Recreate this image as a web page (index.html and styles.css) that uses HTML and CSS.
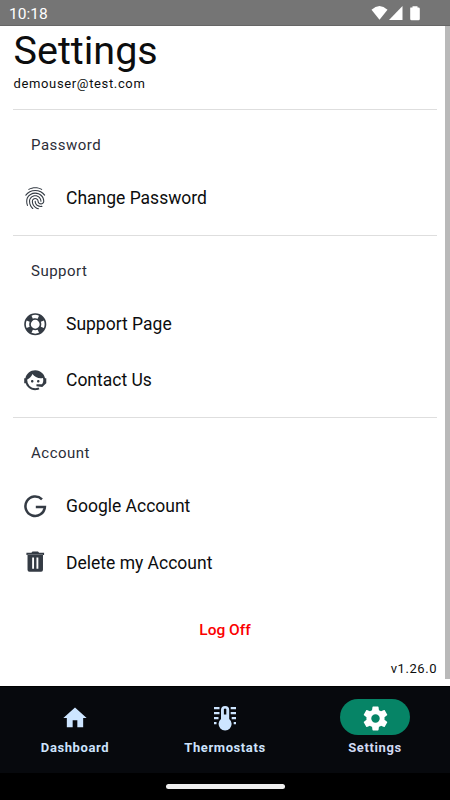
FILE: index.html
```html
<!DOCTYPE html>
<html lang="en">
<head>
<meta charset="utf-8">
<title>Settings</title>
<link rel="stylesheet" href="styles.css">
</head>
<body>
<header class="status">
  <span class="clock">10:18</span>
  <svg class="status-icons" viewBox="0 0 54 20" width="54" height="20">
    <path d="M1.5 6.8Q9.5-.6 17.5 6.800L9.500 16.700Z"/>
    <path d="M19 17L32.500 3V17Z"/>
    <path d="M40.500 4.500h2V3.200h5v1.300h1q1.300 0 1.300 1.300v10q0 1.500-1.300 1.500h-7q-1.300 0-1.300-1.500v-10q0-1.300.3-1.300z"/>
  </svg>
</header>
<main class="content">
  <div class="page">
    <div class="heading">
      <h1>Settings</h1>
      <p class="email">demouser@test.com</p>
    </div>
    <section class="section">
      <h2>Password</h2>
      <a class="row">
        <svg class="icon" viewBox="0 0 24 24"><path d="M17.81 4.47c-.08 0-.16-.02-.23-.06C15.66 3.42 14 3 12.01 3c-1.98 0-3.86.47-5.57 1.41-.24.13-.54.04-.68-.2-.13-.24-.04-.55.2-.68C7.82 2.52 9.86 2 12.01 2c2.13 0 3.99.47 6.03 1.52.25.13.34.43.21.67-.09.18-.26.28-.44.28zM3.5 9.72c-.1 0-.2-.03-.29-.09-.23-.16-.28-.47-.12-.7.99-1.4 2.25-2.5 3.75-3.27C9.98 4.04 14 4.03 17.15 5.65c1.5.77 2.76 1.86 3.75 3.25.16.22.11.54-.12.7-.23.16-.54.11-.7-.12-.9-1.26-2.04-2.25-3.39-2.94-2.87-1.47-6.54-1.47-9.4.01-1.36.7-2.5 1.7-3.4 2.96-.08.14-.23.21-.39.21zm6.25 12.07c-.13 0-.26-.05-.35-.15-.87-.87-1.34-1.43-2.01-2.64-.69-1.23-1.05-2.73-1.05-4.34 0-2.97 2.54-5.39 5.66-5.39s5.66 2.42 5.66 5.39c0 .28-.22.5-.5.5s-.5-.22-.5-.5c0-2.42-2.09-4.39-4.66-4.39-2.57 0-4.66 1.97-4.66 4.39 0 1.44.32 2.77.93 3.85.64 1.15 1.08 1.64 1.85 2.42.19.2.19.51 0 .71-.11.1-.24.15-.37.15zm7.17-1.85c-1.19 0-2.24-.3-3.1-.89-1.49-1.01-2.38-2.65-2.38-4.39 0-.28.22-.5.5-.5s.5.22.5.5c0 1.41.72 2.74 1.94 3.56.71.48 1.54.71 2.54.71.24 0 .64-.03 1.04-.1.27-.05.53.13.58.41.05.27-.13.53-.41.58-.57.11-1.07.12-1.21.12zM14.91 22c-.04 0-.09-.01-.13-.02-1.59-.44-2.63-1.03-3.72-2.1-1.4-1.39-2.17-3.24-2.17-5.22 0-1.62 1.38-2.94 3.08-2.94 1.7 0 3.08 1.32 3.08 2.94 0 1.07.93 1.94 2.08 1.94s2.08-.87 2.08-1.94c0-3.77-3.25-6.83-7.25-6.83-2.84 0-5.44 1.58-6.61 4.03-.39.81-.59 1.76-.59 2.8 0 .78.07 2.01.67 3.61.1.26-.03.55-.29.64-.26.1-.55-.04-.64-.29-.49-1.31-.73-2.61-.73-3.96 0-1.2.23-2.29.68-3.24 1.33-2.79 4.28-4.6 7.51-4.6 4.55 0 8.25 3.51 8.25 7.83 0 1.62-1.38 2.94-3.08 2.94s-3.08-1.32-3.08-2.94c0-1.07-.93-1.94-2.08-1.94s-2.08.87-2.08 1.94c0 1.71.66 3.31 1.87 4.51.95.94 1.86 1.46 3.27 1.85.27.07.42.35.35.61-.05.23-.26.38-.47.38z"/></svg>
        <span>Change Password</span>
      </a>
    </section>
    <section class="section">
      <h2>Support</h2>
      <a class="row">
        <svg class="icon" viewBox="0 0 24 24"><path d="M19.79,15.41C20.74,13.24 20.74,10.75 19.79,8.59L17.05,9.83C17.65,11.21 17.65,12.78 17.06,14.17L19.79,15.41M15.42,4.21C13.25,3.26 10.76,3.26 8.59,4.21L9.83,6.94C11.22,6.35 12.79,6.35 14.18,6.95L15.42,4.21M4.21,8.58C3.26,10.76 3.26,13.24 4.21,15.42L6.95,14.17C6.35,12.79 6.35,11.21 6.95,9.82L4.21,8.58M8.59,19.79C10.76,20.74 13.25,20.74 15.42,19.78L14.18,17.05C12.8,17.65 11.22,17.65 9.84,17.06L8.59,19.79M12,2A10,10 0 0,1 22,12A10,10 0 0,1 12,22A10,10 0 0,1 2,12A10,10 0 0,1 12,2M12,8A4,4 0 0,0 8,12A4,4 0 0,0 12,16A4,4 0 0,0 16,12A4,4 0 0,0 12,8Z" fill-rule="evenodd"/></svg>
        <span>Support Page</span>
      </a>
      <a class="row">
        <svg class="icon" viewBox="0 0 24 24"><path d="M18.72,14.76C19.07,13.91 19.26,13 19.26,12C19.26,11.28 19.15,10.59 18.96,9.95C18.31,10.1 17.63,10.18 16.92,10.18C13.86,10.18 11.15,8.67 9.5,6.34C8.61,8.5 6.91,10.26 4.77,11.22C4.73,11.47 4.73,11.74 4.73,12A7.27,7.27 0 0,0 12,19.27C13.05,19.27 14.06,19.04 14.97,18.63C15.54,19.72 15.8,20.26 15.78,20.26C14.14,20.81 12.87,21.08 12,21.08C9.58,21.08 7.27,20.13 5.57,18.42C4.53,17.38 3.76,16.11 3.33,14.73H2V10.18H3.09C3.93,6.04 7.6,2.92 12,2.92C14.4,2.92 16.71,3.87 18.42,5.58C19.69,6.84 20.54,8.45 20.89,10.18H22V14.73H21.94L18.38,18L13.08,17.4V15.73H17.91L18.72,14.76M9.27,11.77C9.57,11.77 9.86,11.89 10.07,12.11C10.28,12.32 10.4,12.61 10.4,12.91C10.4,13.21 10.28,13.5 10.07,13.71C9.86,13.92 9.57,14.04 9.27,14.04C8.64,14.04 8.13,13.54 8.13,12.91C8.13,12.28 8.64,11.77 9.27,11.77M14.72,11.77C15.35,11.77 15.85,12.28 15.85,12.91C15.85,13.54 15.35,14.04 14.72,14.04C14.09,14.04 13.58,13.54 13.58,12.91A1.14,1.14 0 0,1 14.72,11.77Z"/></svg>
        <span>Contact Us</span>
      </a>
    </section>
    <section class="section">
      <h2>Account</h2>
      <a class="row">
        <svg class="icon" viewBox="0 0 24 24"><path class="line" d="M18.100 5.700A8.800 8.800 0 1 0 20.700 12.700H12.500"/></svg>
        <span>Google Account</span>
      </a>
      <a class="row">
        <svg class="icon" viewBox="0 0 24 24"><path d="M4 3.500h4.500l1-1.200h5l1 1.200H20v1.900H4zM5 5.300h14v13.500q0 1.700-1.700 1.700H6.700Q5 20.500 5 18.800zM9.200 7.800v10h1.700v-10zM13.100 7.800v10h1.700v-10z" fill-rule="evenodd"/></svg>
        <span>Delete my Account</span>
      </a>
    </section>
    <div class="logoff">Log Off</div>
    <div class="version">v1.26.0</div>
  </div>
  <div class="scrollbar"></div>
</main>
<nav class="tabs">
  <a class="tab">
    <span class="pill"><svg viewBox="0 0 24 24" width="28" height="28"><path d="M10,20V14H14V20H19V12H22L12,3L2,12H5V20H10Z"/></svg></span>
    <span>Dashboard</span>
  </a>
  <a class="tab">
    <span class="pill"><svg viewBox="0 0 28 28" width="28" height="28"><path d="M3 3h5.500v2.300H3zM3 8h5.500v2.300H3zM3 13h4.500v2.300H3zM3 18h2.500v2.300H3zM19.700 3H25v2.300h-5.300zM19.700 8H25v2.300h-5.300zM20.700 13H25v2.300h-4.300zM22.700 18H25v2.300h-2.300z"/><path fill-rule="evenodd" d="M10 6a4.100 4.100 0 0 1 8.200 0v8.900a6.500 6.500 0 1 1-8.200 0zM12.900 5v5.500h2.400V5q-1.200-1.100-2.400 0z"/></svg></span>
    <span>Thermostats</span>
  </a>
  <a class="tab active">
    <span class="pill"><svg viewBox="0 0 24 24" width="29" height="29"><path fill-rule="evenodd" d="M12,15.5A3.5,3.5 0 0,1 8.5,12A3.5,3.5 0 0,1 12,8.5A3.5,3.5 0 0,1 15.5,12A3.5,3.5 0 0,1 12,15.5M19.43,12.97C19.47,12.65 19.5,12.33 19.5,12C19.5,11.67 19.47,11.34 19.43,11L21.54,9.37C21.73,9.22 21.78,8.95 21.66,8.73L19.66,5.27C19.54,5.05 19.27,4.96 19.05,5.05L16.56,6.05C16.04,5.66 15.5,5.32 14.87,5.07L14.5,2.42C14.46,2.18 14.25,2 14,2H10C9.75,2 9.54,2.18 9.5,2.42L9.13,5.07C8.5,5.32 7.96,5.66 7.44,6.05L4.95,5.05C4.73,4.96 4.46,5.05 4.34,5.27L2.34,8.73C2.21,8.95 2.27,9.22 2.46,9.37L4.57,11C4.53,11.34 4.5,11.67 4.5,12C4.5,12.33 4.53,12.65 4.57,12.97L2.46,14.63C2.27,14.78 2.21,15.05 2.34,15.27L4.34,18.73C4.46,18.95 4.73,19.03 4.95,18.95L7.44,17.94C7.96,18.34 8.5,18.68 9.13,18.93L9.5,21.58C9.54,21.82 9.75,22 10,22H14C14.25,22 14.46,21.82 14.5,21.58L14.87,18.93C15.5,18.67 16.04,18.34 16.56,17.94L19.05,18.95C19.27,19.03 19.54,18.95 19.66,18.73L21.66,15.27C21.78,15.05 21.73,14.78 21.54,14.63L19.43,12.97Z"/></svg></span>
    <span>Settings</span>
  </a>
</nav>
<footer class="gesture"><span class="handle"></span></footer>
</body>
</html>
```
FILE: styles.css
```css
* { box-sizing: border-box; }
body {
  margin: 0;
  height: 800px;
  display: flex;
  flex-direction: column;
  overflow: hidden;
  background: #fff;
  color: #0c0d0e;
  font-family: Roboto, "Liberation Sans", sans-serif;
}
h1, h2, p { margin: 0; font-weight: 400; }
.status {
  height: 26px;
  flex: none;
  display: flex;
  justify-content: space-between;
  padding: 3px 30px 0 9px;
  background: #757575;
  border-bottom: 1px solid #666;
  color: #fff;
}
.clock { font-size: 15.500px; line-height: 22px; }
.status-icons { fill: #fff; margin-right: -4px; }
.content { height: 660px; flex: none; display: flex; }
.page { flex: 1; padding: 0 8px 0 13px; }
.scrollbar { width: 5px; height: 653px; background: #b9b9b9; }
.heading { height: 83px; padding: 1px 0 0 0.500px; }
h1 { font-size: 39.500px; line-height: 48px; }
.email { font-size: 13px; line-height: 18px; letter-spacing: 0.64px; }
.section { border-top: 1px solid #dedede; padding: 24px 0 8.200px; }
h2 {
  padding-left: 18px;
  margin-bottom: 14px;
  font-size: 15px;
  line-height: 22px;
  letter-spacing: 0.5px;
  color: #2b2d38;
}
.row { display: flex; align-items: center; height: 56.500px; padding-left: 9px; font-size: 17.500px; }
.row span { margin-left: 17.500px; }
.icon { width: 26.500px; height: 26.500px; fill: #343b44; }
.line { fill: none; stroke: #343b44; stroke-width: 2.300; }
.logoff { margin-top: 20px; text-align: center; font-size: 15.500px; line-height: 22px; font-weight: 500; color: #fb0000; }
.version { margin-top: 18.500px; text-align: right; font-size: 13px; line-height: 18px; letter-spacing: 0.55px; }
.tabs { height: 87px; flex: none; display: flex; background: #07090d; border-top: 1px solid #000; }
.tab {
  flex: 1;
  display: flex;
  flex-direction: column;
  align-items: center;
  padding-top: 12px;
  font-size: 13px;
  line-height: 18px;
  font-weight: 700;
  letter-spacing: 0.6px;
  color: #cde3fc;
}
.pill { width: 70px; height: 36px; padding-top: 2px; margin-bottom: 4px; border-radius: 18px; display: flex; align-items: center; justify-content: center; }
.pill svg { fill: #cde5ff; }
.active { color: #d2daf2; }
.active .pill { background: #068466; }
.active .pill svg { fill: #fff; }
.gesture { flex: 1; display: flex; justify-content: center; padding-top: 11px; background: #000; }
.handle { width: 119px; height: 5px; border-radius: 3px; background: #efefef; }
```
